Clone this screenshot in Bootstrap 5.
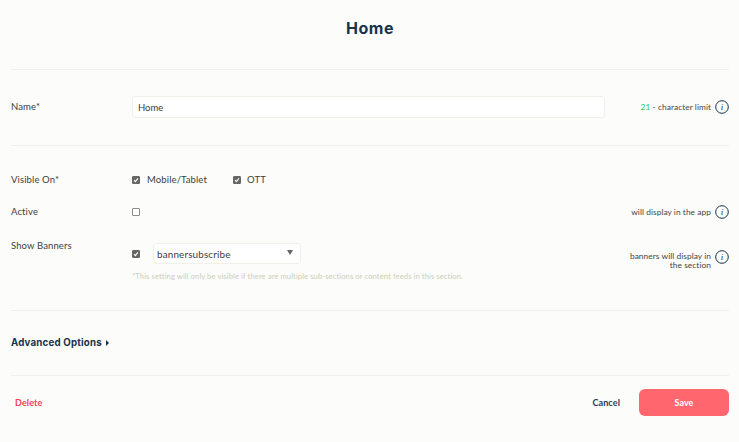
<!DOCTYPE html>
<html lang="en">
<head>
<meta charset="utf-8">
<title>Home</title>
<link rel="stylesheet" href="https://cdn.jsdelivr.net/npm/bootstrap@5.3.0/dist/css/bootstrap.min.css">
<style>
html,body{height:100%}
body{background:#fcfcfa;color:#3c3c3c;font-family:Lato,"Liberation Sans",sans-serif;font-size:9.5px;line-height:12px;letter-spacing:.12px;overflow:hidden}
.pg{padding:0 10px 0 11px}
.ttl{height:69px;margin:0;padding-bottom:14px;font:700 16px/20px Inter,"Liberation Sans",sans-serif;letter-spacing:.55px;color:#16334a}
.rule{height:1px;background:#f0f0ec}
.sec-name{height:75px;padding-bottom:1px}
.lbl{width:121px;flex:none}
.inp.form-control{width:473px;height:22px;flex:none;padding:0 5px;font-size:9.5px;line-height:12px;color:#3c3c3c;background:#fff;border:1px solid #f1f1ec;border-radius:3px}
.inp.form-control:focus{box-shadow:none}
.side{min-width:0}
.note{flex:none;max-width:95px;text-align:right;font-size:8.4px;line-height:9px;letter-spacing:.05px;color:#444}
.note b{font-weight:400;color:#2ecc55}
.ibtn{flex:none;width:14px;height:14px}
.sec-vis{height:164px;padding-top:27px}
.r1{height:14px}
.r2{height:14px;margin-top:18px}
.r3{height:32px;margin-top:20px}
.r3 .lbl{padding-top:1px}
.r3-ctl{padding-top:4px}
.r3-ctl .cb{margin-top:7px}
.r3-side{padding-top:11px}
.r3-side .note{margin-top:2px}
.r1 .cb{margin-top:-1px}
.cb{appearance:none;-webkit-appearance:none;flex:none;width:8px;height:8px;margin:0;background:#fff;border:1px solid #8c8c8c;border-radius:1px}
.cb:checked{background:#666 url("data:image/svg+xml,%3Csvg xmlns='http://www.w3.org/2000/svg' viewBox='0 0 8 8'%3E%3Cpath d='M1.4 4.2l1.8 1.9 3.4-4.2' fill='none' stroke='%23fff' stroke-width='1.5'/%3E%3C/svg%3E") center/100% no-repeat;border-color:#666}
.chk{width:101px;gap:7px}
.chk2{gap:6px}
.sel.form-select{width:148px;height:21px;margin-left:13px;padding:0 3px;font-size:9.9px;line-height:12px;letter-spacing:.15px;color:#3c3c3c;background:#fff url("data:image/svg+xml,%3Csvg xmlns='http://www.w3.org/2000/svg' viewBox='0 0 6 5'%3E%3Cpath d='M0 0h6L3 5z' fill='%23666'/%3E%3C/svg%3E") right 7px top 6px/6px 5px no-repeat;border:1px solid #f1f1ec;border-radius:3px}
.hint{margin:0 0 0 121px;font-size:7.7px;line-height:10px;letter-spacing:.06px;color:#ccceb9}
.sec-adv{height:64px;font:700 9.7px/12px Inter,"Liberation Sans",sans-serif;letter-spacing:.2px;color:#16334a}
.tri{display:inline-block;width:0;height:0;margin-left:4px;border-left:3.5px solid #16334a;border-top:3px solid transparent;border-bottom:3px solid transparent}
.foot{height:66px;padding-bottom:13px}
.del{color:#f5404f;font-size:9px;font-weight:700;margin-left:4px;padding:0;text-decoration:none}
.cancel{color:#1f3d54;font-size:9px;font-weight:700;padding:0;margin-right:19px;text-decoration:none}
.save.btn{width:90px;height:27px;padding:0;font-size:9px;font-weight:700;line-height:12px;color:#fff;background:#ff666d;border:0;border-radius:6px}
</style>
</head>
<body>
<div class="pg">
  <h1 class="ttl d-flex align-items-center justify-content-center">Home</h1>
  <div class="rule"></div>

  <div class="sec-name d-flex align-items-center">
    <label class="lbl" for="nm">Name*</label>
    <input id="nm" class="inp form-control" value="Home">
    <div class="side flex-grow-1 d-flex align-items-center justify-content-end gap-1">
      <span class="note"><b>21</b> - character limit</span>
      <svg class="ibtn" viewBox="0 0 14 14"><circle cx="7" cy="7" r="6.3" fill="none" stroke="#16334a" stroke-width="1"/><text x="7" y="10.2" text-anchor="middle" font-family="Liberation Serif" font-style="italic" font-size="9" fill="#16334a">i</text></svg>
    </div>
  </div>
  <div class="rule"></div>

  <div class="sec-vis">
    <div class="r1 d-flex align-items-center">
      <span class="lbl">Visible On*</span>
      <label class="chk d-flex align-items-center"><input class="cb" type="checkbox" checked>Mobile/Tablet</label>
      <label class="chk2 d-flex align-items-center"><input class="cb" type="checkbox" checked>OTT</label>
    </div>
    <div class="r2 d-flex align-items-center">
      <span class="lbl">Active</span>
      <input class="cb" type="checkbox">
      <div class="side flex-grow-1 d-flex align-items-center justify-content-end gap-1">
        <span class="note">will display in the app</span>
        <svg class="ibtn" viewBox="0 0 14 14"><circle cx="7" cy="7" r="6.3" fill="none" stroke="#16334a" stroke-width="1"/><text x="7" y="10.2" text-anchor="middle" font-family="Liberation Serif" font-style="italic" font-size="9" fill="#16334a">i</text></svg>
      </div>
    </div>
    <div class="r3 d-flex">
      <span class="lbl">Show Banners</span>
      <div class="r3-ctl d-flex align-items-start">
        <input class="cb" type="checkbox" checked>
        <select class="sel form-select"><option>bannersubscribe</option></select>
      </div>
      <div class="side r3-side flex-grow-1 d-flex align-items-start justify-content-end gap-1">
        <span class="note">banners will display in the section</span>
        <svg class="ibtn" viewBox="0 0 14 14"><circle cx="7" cy="7" r="6.3" fill="none" stroke="#16334a" stroke-width="1"/><text x="7" y="10.2" text-anchor="middle" font-family="Liberation Serif" font-style="italic" font-size="9" fill="#16334a">i</text></svg>
      </div>
    </div>
    <p class="hint">*This setting will only be visible if there are multiple sub-sections or content feeds in this section.</p>
  </div>
  <div class="rule"></div>

  <div class="sec-adv d-flex align-items-center">Advanced Options<span class="tri"></span></div>
  <div class="rule"></div>

  <div class="foot d-flex align-items-center">
    <a class="del" href="#">Delete</a>
    <a class="cancel ms-auto" href="#">Cancel</a>
    <button class="save btn" type="button">Save</button>
  </div>
</div>
</body>
</html>
